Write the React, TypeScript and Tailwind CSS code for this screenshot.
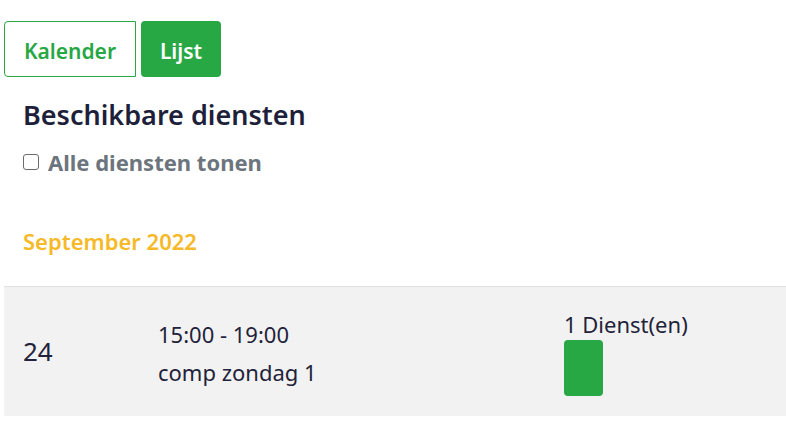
export default function App() {
  return (
    <div className="min-h-screen bg-white text-[#22223a]" style={{ fontFamily: '"Noto Sans", "Open Sans", sans-serif' }}>
      <div className="flex gap-[5px] pl-[4px] pt-[21px]">
        <button className="flex h-[56px] w-[132px] items-center justify-center rounded-l-[4px] border border-[#28a745] bg-white pt-[5px] text-[21px] font-semibold text-[#28a745]">
          Kalender
        </button>
        <button className="flex h-[56px] w-[80px] items-center justify-center rounded-[4px] bg-[#28a745] pt-[5px] text-[21px] font-semibold text-white">
          Lijst
        </button>
      </div>
      <div className="px-[23px]">
        <h2 className="mt-[20px] text-[27px] font-semibold leading-[36px] text-[#1e1f3b]">Beschikbare diensten</h2>
        <label className="mt-[14px] flex items-center gap-[9px] text-[22px] font-bold leading-[30px] text-[#6c757d]">
          <span className="h-[16px] w-[16px] rounded-[3px] border border-[#6b6b6b] bg-white" />
          Alle diensten tonen
        </label>
        <div className="mt-[49px] text-[22px] font-semibold leading-[30px] text-[#f6b928]">September 2022</div>
      </div>
      <div className="ml-[4px] mt-[30px] flex h-[130px] items-center border-t border-[#dedede] bg-[#f2f2f2]">
        <div className="w-[154px] pl-[19px] text-[26px]">24</div>
        <div className="w-[406px] pt-[2px] text-[22px] leading-[38px]">
          <div>15:00 - 19:00</div>
          <div>comp zondag 1</div>
        </div>
        <div className="flex flex-col self-start pt-[21px]">
          <div className="text-[22px] leading-[32px]">1 Dienst(en)</div>
          <div className="h-[56px] w-[39px] rounded-[4px] bg-[#28a745]" />
        </div>
      </div>
    </div>
  );
}
